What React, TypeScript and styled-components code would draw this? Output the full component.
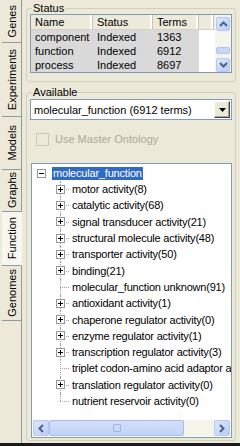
import React from "react";
import styled, { createGlobalStyle } from "styled-components";

const Global = createGlobalStyle`
  html, body { margin: 0; padding: 0; background: #ece9d8; }
  body { font-family: "Liberation Sans", Arial, sans-serif; font-size: 11px; color: #000; }
`;

const tabs = [
  { label: "Genes", h: 43 },
  { label: "Experiments", h: 74 },
  { label: "Models", h: 53 },
  { label: "Graphs", h: 42 },
  { label: "Function", h: 54, active: true },
  { label: "Genomes", h: 55 },
];

const statusRows = [
  ["component", "Indexed", "1363"],
  ["function", "Indexed", "6912"],
  ["process", "Indexed", "8697"],
];

const tree = [
  { t: "motor activity(8)", plus: true },
  { t: "catalytic activity(68)", plus: true },
  { t: "signal transducer activity(21)", plus: true },
  { t: "structural molecule activity(48)", plus: true },
  { t: "transporter activity(50)", plus: true },
  { t: "binding(21)", plus: true },
  { t: "molecular_function unknown(91)", plus: false },
  { t: "antioxidant activity(1)", plus: true },
  { t: "chaperone regulator activity(0)", plus: true },
  { t: "enzyme regulator activity(1)", plus: true },
  { t: "transcription regulator activity(3)", plus: true },
  { t: "triplet codon-amino acid adaptor activity(1)", plus: false },
  { t: "translation regulator activity(0)", plus: true },
  { t: "nutrient reservoir activity(0)", plus: false },
];

function App() {
  return (
    <>
      <Global />
      <Window>
        <TabStrip>
          {tabs.map((tb) => (
            <Tab key={tb.label} $h={tb.h} $active={!!tb.active}>
              <span>{tb.label}</span>
            </Tab>
          ))}
          <TabRest />
        </TabStrip>
        <Content>
          <Group $h={80}>
            <Legend>Status</Legend>
            <Table>
              <TableMain>
                <HeaderRow>
                  <HeadCell $w={62}>Name</HeadCell>
                  <HeadCell $w={60}>Status</HeadCell>
                  <HeadCell $w={46}>Terms</HeadCell>
                  <HeadCell $w={15} />
                </HeaderRow>
                {statusRows.map((r) => (
                  <Row key={r[0]}>
                    <Cell $w={62}>{r[0]}</Cell>
                    <Cell $w={60}>{r[1]}</Cell>
                    <Cell $w={46}>{r[2]}</Cell>
                  </Row>
                ))}
              </TableMain>
              <VScroll>
                <ScrollBtn>
                  <svg width="9" height="6" viewBox="0 0 9 6">
                    <path d="M1 5 L4.5 1.5 L8 5" fill="none" stroke="#4d6185" strokeWidth="2" />
                  </svg>
                </ScrollBtn>
                <VTrack>
                  <VThumb />
                </VTrack>
                <ScrollBtn>
                  <svg width="9" height="6" viewBox="0 0 9 6">
                    <path d="M1 1 L4.5 4.5 L8 1" fill="none" stroke="#4d6185" strokeWidth="2" />
                  </svg>
                </ScrollBtn>
              </VScroll>
            </Table>
          </Group>
          <Group $grow>
            <Legend>Available</Legend>
            <Combo>
              <ComboText>molecular_function (6912 terms)</ComboText>
              <ComboBtn>
                <svg width="7" height="4" viewBox="0 0 7 4">
                  <path d="M0 0 H7 L3.5 4 Z" fill="#000" />
                </svg>
              </ComboBtn>
            </Combo>
            <CheckRow>
              <CheckBox />
              <CheckLabel>Use Master Ontology</CheckLabel>
            </CheckRow>
            <TreeBox>
              <TreeArea>
                <RootRow>
                  <Expander>
                    <svg width="7" height="7" viewBox="0 0 7 7">
                      <path d="M1 3.5 H6" stroke="#000" strokeWidth="1" />
                    </svg>
                  </Expander>
                  <Selected>molecular_function</Selected>
                </RootRow>
                <Children>
                  {tree.map((n, i) => (
                    <Node key={n.t} $last={i === tree.length - 1}>
                      <HLine />
                      {n.plus && (
                        <Expander>
                          <svg width="7" height="7" viewBox="0 0 7 7">
                            <path d="M1 3.5 H6 M3.5 1 V6" stroke="#000" strokeWidth="1" />
                          </svg>
                        </Expander>
                      )}
                      <NodeText>{n.t}</NodeText>
                    </Node>
                  ))}
                </Children>
              </TreeArea>
              <HScroll>
                <HBtn>
                  <svg width="6" height="9" viewBox="0 0 6 9">
                    <path d="M5 1 L1.5 4.5 L5 8" fill="none" stroke="#4d6185" strokeWidth="2" />
                  </svg>
                </HBtn>
                <HTrack>
                  <HThumb>
                    <Grip />
                  </HThumb>
                </HTrack>
                <HBtn>
                  <svg width="6" height="9" viewBox="0 0 6 9">
                    <path d="M1 1 L4.5 4.5 L1 8" fill="none" stroke="#4d6185" strokeWidth="2" />
                  </svg>
                </HBtn>
              </HScroll>
            </TreeBox>
          </Group>
        </Content>
      </Window>
    </>
  );
}

export default App;

const Window = styled.div`
  width: 240px;
  height: 446px;
  display: flex;
  background: #ece9d8;
  border-bottom: 3px solid #1a1a1a;
  box-sizing: border-box;
  overflow: hidden;
`;

const TabStrip = styled.div`
  width: 22px;
  display: flex;
  flex-direction: column;
  flex-shrink: 0;
`;

const Tab = styled.div<{ $h: number; $active: boolean }>`
  height: ${(p) => p.$h}px;
  box-sizing: border-box;
  display: flex;
  align-items: center;
  justify-content: center;
  background: ${(p) => (p.$active ? "#f7f6f1" : "#ece9d8")};
  border-right: 1px solid ${(p) => (p.$active ? "transparent" : "#919b9c")};
  border-bottom: 1px solid #919b9c;
  margin-left: 2px;
  > span {
    writing-mode: vertical-rl;
    transform: rotate(180deg);
    font-size: 11px;
    color: #000;
  }
`;

const TabRest = styled.div`
  flex: 1;
  border-right: 1px solid #919b9c;
`;

const Content = styled.div`
  flex: 1;
  display: flex;
  flex-direction: column;
  padding: 2px 4px 2px 4px;
  gap: 4px;
  background: #ece9d8;
`;

const Group = styled.fieldset<{ $h?: number; $grow?: boolean }>`
  margin: 0;
  padding: 0 3px 2px 3px;
  border: 1px solid #d0d0bf;
  border-radius: 3px;
  min-width: 0;
  ${(p) => (p.$h ? `height: ${p.$h}px;` : "")}
  ${(p) => (p.$grow ? "flex: 1;" : "")}
  box-sizing: border-box;
  display: flex;
  flex-direction: column;
`;

const Legend = styled.legend`
  padding: 0 1px;
  margin-left: 2px;
  font-size: 11px;
  line-height: 12px;
  color: #000;
`;

const Table = styled.div`
  display: flex;
  border: 1px solid #7f9db9;
  background: #fff;
  height: 59px;
  box-sizing: border-box;
`;

const TableMain = styled.div`
  flex: 1;
  display: flex;
  flex-direction: column;
`;

const HeaderRow = styled.div`
  display: flex;
  height: 15px;
  background: #ebeadb;
  border-bottom: 1px solid #d6d2c2;
  box-sizing: border-box;
`;

const HeadCell = styled.div<{ $w: number }>`
  width: ${(p) => p.$w}px;
  box-sizing: border-box;
  padding-left: 4px;
  font-size: 11px;
  line-height: 14px;
  border-right: 1px solid #c7c5b2;
  box-shadow: inset -2px 0 0 #fff;
`;

const Row = styled.div`
  display: flex;
  height: 14px;
`;

const Cell = styled.div<{ $w: number }>`
  width: ${(p) => p.$w}px;
  box-sizing: border-box;
  padding-left: 4px;
  background: #d9d9d9;
  font-size: 11px;
  line-height: 14px;
  white-space: nowrap;
  overflow: hidden;
`;

const VScroll = styled.div`
  width: 16px;
  display: flex;
  flex-direction: column;
  background: #f5f4ee;
  padding: 2px 0 0 0;
`;

const ScrollBtn = styled.div`
  height: 14px;
  margin: 0 1px;
  border: 1px solid #b5c8f6;
  border-radius: 2px;
  background: linear-gradient(135deg, #dce6fd, #b9cdf9);
  display: flex;
  align-items: center;
  justify-content: center;
  box-sizing: border-box;
`;

const VTrack = styled.div`
  flex: 1;
  display: flex;
  flex-direction: column;
  justify-content: flex-end;
  padding-bottom: 4px;
`;

const VThumb = styled.div`
  height: 5px;
  margin: 0 1px;
  background: #c8d6f8;
  border: 1px solid #b1c3ef;
  border-radius: 2px;
`;

const Combo = styled.div`
  margin-top: 1px;
  height: 21px;
  display: flex;
  align-items: center;
  border: 1px solid #7f9db9;
  background: #fff;
  box-sizing: border-box;
  padding: 1px;
`;

const ComboText = styled.div`
  flex: 1;
  font-size: 11px;
  padding-left: 2px;
  white-space: nowrap;
`;

const ComboBtn = styled.div`
  width: 16px;
  height: 17px;
  box-sizing: border-box;
  background: #ece9d8;
  border: 1px solid;
  border-color: #fff #404040 #404040 #fff;
  box-shadow: inset -1px -1px 0 #aca899;
  display: flex;
  align-items: center;
  justify-content: center;
`;

const CheckRow = styled.div`
  display: flex;
  align-items: center;
  gap: 6px;
  height: 14px;
  margin: 12px 0 17px 6px;
`;

const CheckBox = styled.div`
  width: 11px;
  height: 11px;
  border: 1px solid #cac8bb;
  background: #ece9d8;
`;

const CheckLabel = styled.span`
  font-size: 11px;
  color: #aca899;
`;

const TreeBox = styled.div`
  flex: 1;
  display: flex;
  flex-direction: column;
  border: 1px solid #7f9db9;
  background: #fff;
  margin: 0 0 0 1px;
  overflow: hidden;
`;

const TreeArea = styled.div`
  flex: 1;
  padding: 1px 0 0 5px;
  overflow: hidden;
  white-space: nowrap;
`;

const RootRow = styled.div`
  display: flex;
  align-items: center;
  height: 16px;
  gap: 6px;
`;

const Expander = styled.div`
  width: 9px;
  height: 9px;
  box-sizing: border-box;
  border: 1px solid #919b9c;
  background: #fff;
  display: flex;
  align-items: center;
  justify-content: center;
  flex-shrink: 0;
  position: relative;
  z-index: 1;
`;

const Selected = styled.span`
  background: #316ac5;
  color: #fff;
  font-size: 11px;
  line-height: 13px;
  padding: 0 1px;
  letter-spacing: -0.2px;
`;

const Children = styled.div`
  margin-left: 19px;
`;

const Node = styled.div<{ $last: boolean }>`
  position: relative;
  display: flex;
  align-items: center;
  height: 16.3px;
  &::before {
    content: "";
    position: absolute;
    left: 4px;
    top: 0;
    height: ${(p) => (p.$last ? "50%" : "100%")};
    border-left: 1px dotted #a0a0a0;
  }
`;

const HLine = styled.div`
  position: absolute;
  left: 4px;
  top: 50%;
  width: 9px;
  border-top: 1px dotted #a0a0a0;
`;

const NodeText = styled.span`
  position: absolute;
  left: 16px;
  font-size: 11px;
  letter-spacing: -0.2px;
`;

const HScroll = styled.div`
  height: 16px;
  display: flex;
  background: #f5f4ea;
  margin: 0 1px 1px 1px;
`;

const HBtn = styled.div`
  width: 16px;
  border: 1px solid #b5c8f6;
  border-radius: 2px;
  background: linear-gradient(135deg, #dce6fd, #b9cdf9);
  display: flex;
  align-items: center;
  justify-content: center;
  box-sizing: border-box;
`;

const HTrack = styled.div`
  flex: 1;
  display: flex;
  padding-right: 30px;
`;

const HThumb = styled.div`
  flex: 1;
  background: linear-gradient(#d3defb, #c2d2f8);
  border: 1px solid #aabdea;
  border-radius: 2px;
  display: flex;
  align-items: center;
  justify-content: center;
`;

const Grip = styled.div`
  width: 6px;
  height: 6px;
  border: 1px solid #9fb4e6;
  border-radius: 1px;
`;
